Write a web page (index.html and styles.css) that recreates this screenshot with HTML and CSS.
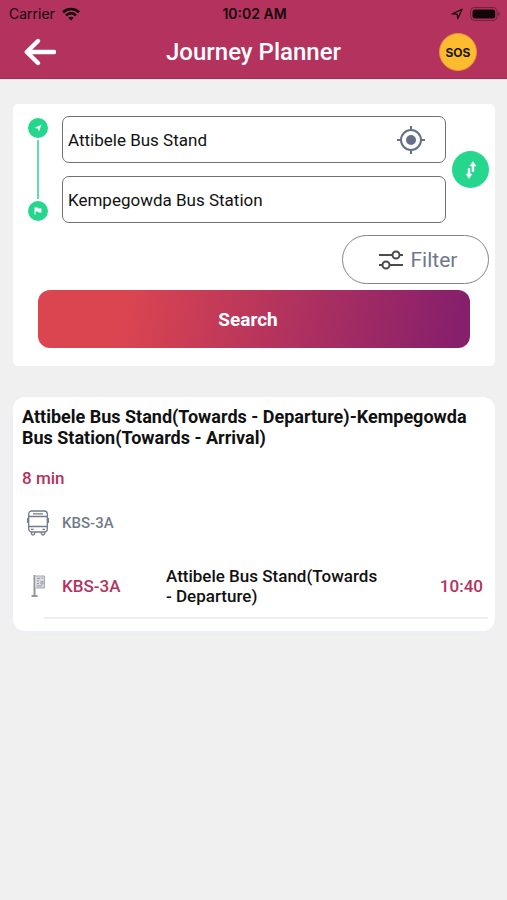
FILE: index.html
```html
<!DOCTYPE html>
<html lang="en">
<head>
<meta charset="utf-8">
<meta name="viewport" content="width=device-width, initial-scale=1">
<title>Journey Planner</title>
<link rel="stylesheet" href="styles.css">
</head>
<body>
<header class="top">
  <div class="status">
    <div class="status-left">
      <span>Carrier</span>
      <svg width="18" height="14" viewBox="0 0 18 14" aria-hidden="true"><g fill="none" stroke="currentColor" stroke-width="2.6"><path d="M1 5.2C5.5 1 12.500 1 17 5.200"/><path d="M4 8.400C7 5.700 11 5.700 14 8.400"/></g><path d="M6.300 10.700Q9 8.600 11.700 10.700L9 13.500Z" fill="currentColor"/></svg>
    </div>
    <span class="clock">10:02 AM</span>
    <div class="status-right">
      <svg width="12" height="12" viewBox="0 0 12 12" aria-hidden="true"><path d="M1 6L11 1.200L6.700 10.800L6.200 6.200Z" fill="none" stroke="currentColor" stroke-width="1.200" stroke-linejoin="round"/></svg>
      <svg width="30" height="14" viewBox="0 0 30 14" aria-hidden="true"><rect x=".6" y=".6" width="26.500" height="12.800" rx="4" fill="none" stroke="currentColor" opacity=".4"/><rect x="2.500" y="2.500" width="22.700" height="9" rx="2.300" fill="currentColor"/><path d="M28.300 5v4q1.600-.6 1.600-2t-1.600-2Z" fill="currentColor" opacity=".4"/></svg>
    </div>
  </div>
  <div class="bar">
    <button class="back" type="button" aria-label="Back">
      <svg width="32" height="28" viewBox="0 0 32 28" aria-hidden="true"><path d="M30 14H3M14 3L2.800 14L14 25" fill="none" stroke="#fff" stroke-width="4.400" stroke-linecap="round" stroke-linejoin="round"/></svg>
    </button>
    <h1>Journey Planner</h1>
    <button class="sos" type="button">SOS</button>
  </div>
</header>

<main>
  <form class="planner">
    <div class="route">
      <div class="rail" aria-hidden="true">
        <svg width="20" height="20" viewBox="0 0 20 20"><circle cx="10" cy="10" r="10" fill="#25d78d"/><path d="M6.500 10L13.500 6.500L11 13.500L9.800 10.400Z" fill="#fff"/></svg>
        <span class="rail-line"></span>
        <svg width="20" height="20" viewBox="0 0 20 20"><circle cx="10" cy="10" r="10" fill="#25d78d"/><path d="M6.500 13.500V6.500H10L10.500 7.500H13.500V11.500H10.500L10 10.600H7.500V13.500Z" fill="#fff"/></svg>
      </div>
      <div class="fields">
        <div class="field">
          <input type="text" aria-label="From" value="Attibele Bus Stand">
          <button class="locate" type="button" aria-label="Use current location">
            <svg width="30" height="30" viewBox="0 0 30 30" aria-hidden="true"><g fill="none" stroke="#667087" stroke-width="2"><circle cx="15" cy="15" r="10"/><path d="M15 1V6M15 24V29M1 15H6M24 15H29"/></g><circle cx="15" cy="15" r="5" fill="#667087"/></svg>
          </button>
        </div>
        <div class="field">
          <input type="text" aria-label="To" value="Kempegowda Bus Station">
        </div>
      </div>
      <button class="swap" type="button" aria-label="Swap stops">
        <svg width="12" height="18" viewBox="0 0 12 18" aria-hidden="true"><path d="M8 .5L11 5H9V10.500H7V5H5ZM4 17.500L1 13H3V7.500H5V13H7Z" fill="#fff" stroke="#fff" stroke-width=".5" stroke-linejoin="round"/></svg>
      </button>
    </div>
    <button class="filter" type="button">
      <svg width="26" height="20" viewBox="0 0 26 20" aria-hidden="true"><g fill="none" stroke="#4b4b4f" stroke-width="2"><path d="M1 5H14.500M21.500 5H25M1 15H4.500M11.500 15H25"/><circle cx="18" cy="5" r="3.500"/><circle cx="8" cy="15" r="3.500"/></g></svg>
      Filter
    </button>
    <button class="search" type="submit">Search</button>
  </form>

  <section class="result">
    <h2>Attibele Bus Stand(Towards - Departure)-Kempegowda Bus Station(Towards - Arrival)</h2>
    <p class="duration">8 min</p>
    <div class="leg">
      <svg width="22" height="26" viewBox="0 0 22 26" aria-hidden="true"><g fill="none" stroke="#737b89" stroke-width="1.300" stroke-linejoin="round"><rect x="1.700" y="1" width="18.600" height="21" rx="3"/><path d="M1.700 6.500H20.300M1.700 16.500H20.300M6 3.800H16M.7 8V13M21.300 8V13M4 19.300H6.500M15.500 19.300H18"/><path d="M4 22.300L5 24.800H7L8 22.300M14 22.300L15 24.800H17L18 22.300"/></g></svg>
      <span class="line-name">KBS-3A</span>
    </div>
    <div class="stop">
      <svg width="22" height="24" viewBox="0 0 22 24" aria-hidden="true"><path d="M7.500 1V21M4.500 22H10.500" fill="none" stroke="#92979f" stroke-width="2"/><path d="M8.500 2H17.500V14H8.500" fill="#d8dbe0" stroke="#a5aab2"/><path d="M10 4.500H13M10 7H12M10 9.500H12M10 12H15M14 7.500H16V10H14ZM14.500 4H16" fill="none" stroke="#989ea8"/></svg>
      <span class="stop-line">KBS-3A</span>
      <span class="stop-name">Attibele Bus Stand(Towards - Departure)</span>
      <time class="stop-time">10:40</time>
    </div>
  </section>
</main>
</body>
</html>
```

FILE: styles.css
```css
* {
  box-sizing: border-box;
}

body {
  margin: 0;
  min-height: 100vh;
  background: #f0f0f0;
  color: #111;
  font-family: Roboto, "Liberation Sans", sans-serif;
}

button {
  padding: 0;
  border: 0;
  background: none;
  font-family: inherit;
  cursor: pointer;
}

svg {
  display: block;
  flex: none;
}

h1,
h2,
p {
  margin: 0;
}

.top {
  height: 79px;
  background: #b3335e;
  border-bottom: 1px solid #a82852;
}

.status {
  display: grid;
  grid-template-columns: 1fr auto 1fr;
  align-items: center;
  height: 27px;
  padding: 0 7px 0 9px;
  color: #12060b;
  font-family: Inter, "Liberation Sans", sans-serif;
  font-size: 14px;
}

.status-left,
.status-right {
  display: flex;
  align-items: center;
  gap: 7px;
}

.status-right {
  justify-content: flex-end;
}

.clock {
  font-weight: 600;
}

.bar {
  display: grid;
  grid-template-columns: 1fr auto 1fr;
  align-items: center;
  height: 50px;
  padding: 0 24px;
}

.back {
  justify-self: start;
}

h1 {
  color: #fff;
  font-size: 24px;
  font-weight: 500;
}

.sos {
  justify-self: end;
  width: 38px;
  height: 38px;
  margin-right: 6px;
  border: 1px solid #ee8e45;
  border-radius: 50%;
  background: #fcbc2e;
  color: #1c1408;
  font-family: Inter, sans-serif;
  font-size: 12px;
  font-weight: 700;
}

main {
  display: flex;
  flex-direction: column;
  gap: 31px;
  padding: 25px 12px 24px 13px;
}

.planner {
  display: flex;
  flex-direction: column;
  padding: 12px 0 18px;
  border-radius: 5px;
  background: #fff;
}

.route {
  display: grid;
  grid-template-columns: 49px 1fr 49px;
}

.rail {
  display: flex;
  flex-direction: column;
  align-items: center;
  gap: 2px;
  padding: 2px 0;
}

.rail-line {
  flex: 1;
  width: 2px;
  background: #60dfab;
}

.fields {
  display: grid;
  gap: 13px;
}

.field {
  display: flex;
  align-items: center;
  height: 47px;
  padding-right: 19px;
  border: 1px solid #707070;
  border-radius: 7px;
}

.field input {
  flex: 1;
  min-width: 0;
  height: 100%;
  padding: 0 5px;
  border: 0;
  outline: 0;
  background: none;
  color: #111;
  font-family: inherit;
  font-size: 17px;
}

.swap {
  display: grid;
  place-items: center;
  place-self: center;
  width: 37px;
  height: 37px;
  border-radius: 50%;
  background: #25d78d;
}

.filter {
  display: flex;
  align-items: center;
  justify-content: center;
  align-self: flex-end;
  gap: 7px;
  width: 147px;
  height: 49px;
  margin: 12px 6px 6px 0;
  padding-left: 4px;
  border: 1px solid #7f8598;
  border-radius: 25px;
  color: #6f788c;
  font-size: 21px;
}

.search {
  height: 58px;
  margin: 0 25px;
  padding-right: 12px;
  border-radius: 12px;
  background: linear-gradient(100deg, #db4550 20%, #861f6c 97%);
  color: #fff;
  font-size: 19px;
  font-weight: 700;
}

.result {
  padding: 9px 7px 12px 9px;
  border-radius: 12px;
  background: #fff;
  box-shadow: 0 2px 8px #eceef8;
}

h2 {
  font-size: 18px;
  font-weight: 700;
  line-height: 21px;
}

.duration {
  margin-top: 20px;
  color: #b3335e;
  font-size: 17px;
  font-weight: 500;
  line-height: 20px;
}

.leg {
  display: flex;
  align-items: center;
  gap: 13px;
  margin-top: 22px;
  padding-left: 5px;
}

.line-name {
  color: #737b89;
  font-size: 15px;
  font-weight: 500;
}

.stop {
  display: grid;
  grid-template-columns: 22px 91px minmax(0, 220px) 1fr;
  column-gap: 13px;
  align-items: center;
  margin-top: 30px;
  padding: 0 5px 13px;
  background: linear-gradient(#eeeeef, #eeeeef) right bottom / calc(100% - 22px) 2px no-repeat;
}

.stop-line {
  color: #b3335e;
  font-size: 17px;
  font-weight: 500;
}

.stop-name {
  font-size: 17px;
  font-weight: 500;
  line-height: 20px;
}

.stop-time {
  justify-self: end;
  color: #b3335e;
  font-size: 17px;
  font-weight: 500;
}
```
